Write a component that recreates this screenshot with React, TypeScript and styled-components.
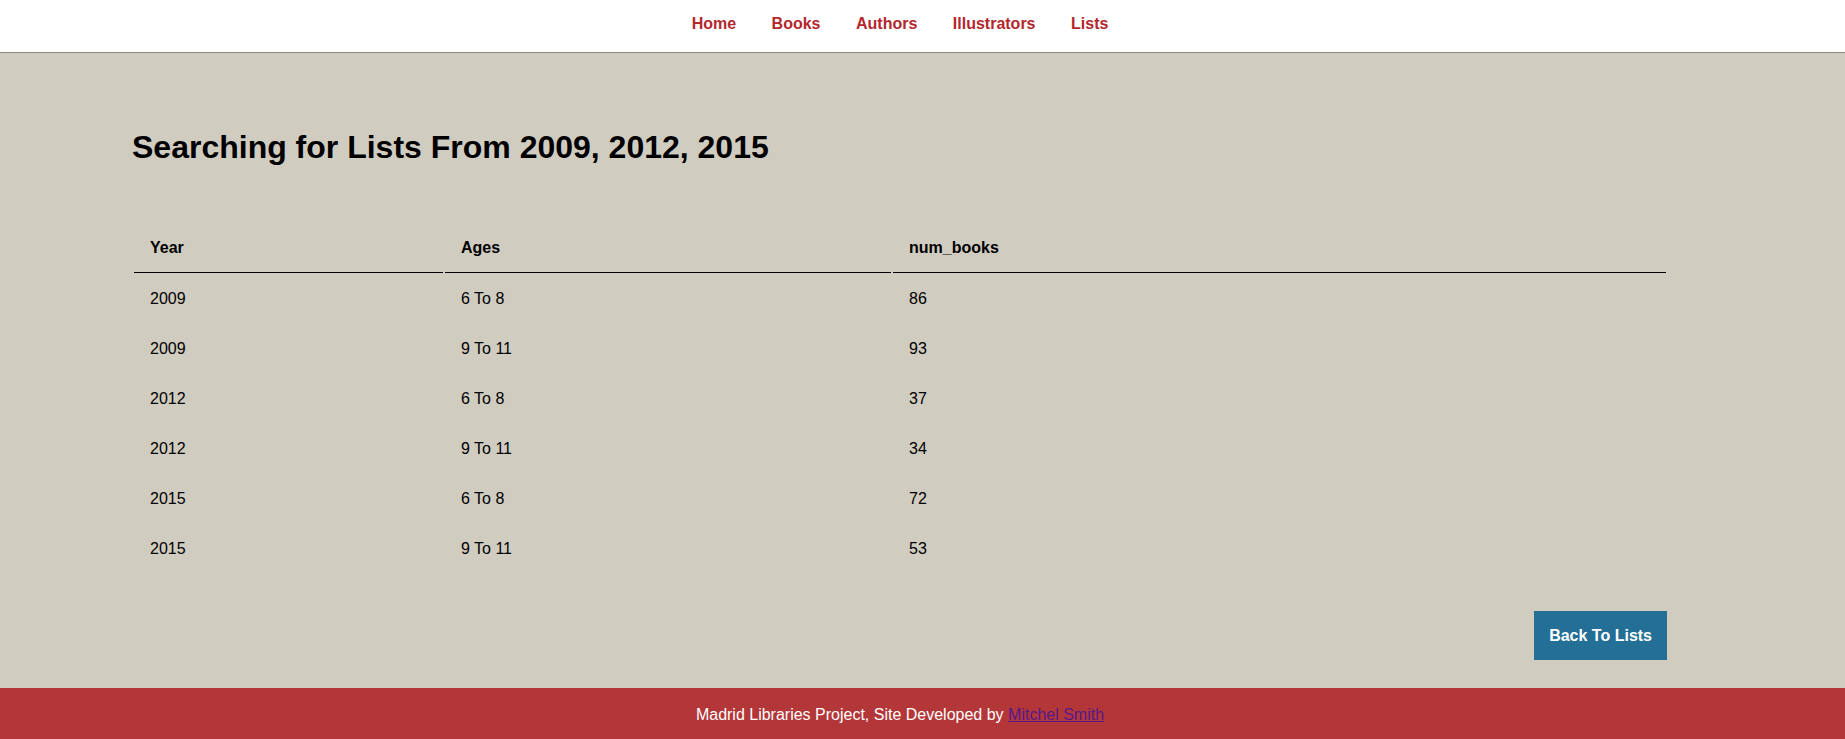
import React from "react";
import styled, { createGlobalStyle } from "styled-components";

const GlobalStyle = createGlobalStyle`
  *, *::before, *::after { box-sizing: border-box; }
  html, body { margin: 0; padding: 0; }
  body {
    font-family: "Liberation Sans", Arial, sans-serif;
    font-size: 16px;
    color: #000;
    background: #d0ccc0;
  }
`;

const Header = styled.header`
  height: 53px;
  background: #ffffff;
  border-bottom: 1px solid #8c8a82;
  padding: 15px 45px 0 0;
`;

const Nav = styled.nav`
  display: flex;
  justify-content: center;
  gap: 35.5px;
`;

const NavLink = styled.a`
  color: #b3272d;
  font-weight: bold;
  font-size: 16px;
  line-height: 18px;
  text-decoration: none;
  cursor: pointer;
`;

const Main = styled.main`
  background: #d0ccc0;
  padding: 76px 45px 28px 0;
`;

const Container = styled.div`
  width: 1536px;
  margin-left: 132px;
`;

const Title = styled.h1`
  margin: 0 0 56px;
  font-size: 32px;
  line-height: 37px;
  font-weight: bold;
`;

const Table = styled.table`
  width: 1536px;
  table-layout: fixed;
  border-collapse: separate;
  border-spacing: 2px;
  margin-bottom: 36px;
`;

const Th = styled.th<{ $w: number }>`
  width: ${(p) => p.$w}px;
  text-align: left;
  font-weight: bold;
  font-size: 16px;
  line-height: 18px;
  padding: 15px 16px;
  border-bottom: 1px solid #000;
`;

const Td = styled.td`
  font-size: 16px;
  line-height: 18px;
  padding: 15px 16px;
`;

const Actions = styled.div`
  display: flex;
  justify-content: flex-end;
  padding-right: 1px;
`;

const Button = styled.button`
  background: #236f96;
  color: #ffffff;
  border: none;
  font-family: "Liberation Sans", Arial, sans-serif;
  font-weight: bold;
  font-size: 16px;
  line-height: 19px;
  padding: 15px 15px;
  cursor: pointer;
`;

const Footer = styled.footer`
  background: #b33638;
  color: #ffffff;
  text-align: center;
  font-size: 16px;
  line-height: 18px;
  padding: 18px 45px 15px 0;
`;

const FooterLink = styled.a`
  color: #551a8b;
  text-decoration: underline;
`;

const rows = [
  ["2009", "6 To 8", "86"],
  ["2009", "9 To 11", "93"],
  ["2012", "6 To 8", "37"],
  ["2012", "9 To 11", "34"],
  ["2015", "6 To 8", "72"],
  ["2015", "9 To 11", "53"],
];

export default function App() {
  return (
    <>
      <GlobalStyle />
      <Header>
        <Nav>
          <NavLink>Home</NavLink>
          <NavLink>Books</NavLink>
          <NavLink>Authors</NavLink>
          <NavLink>Illustrators</NavLink>
          <NavLink>Lists</NavLink>
        </Nav>
      </Header>
      <Main>
        <Container>
          <Title>Searching for Lists From 2009, 2012, 2015</Title>
          <Table>
            <thead>
              <tr>
                <Th $w={309}>Year</Th>
                <Th $w={446}>Ages</Th>
                <Th $w={773}>num_books</Th>
              </tr>
            </thead>
            <tbody>
              {rows.map((r, i) => (
                <tr key={i}>
                  <Td>{r[0]}</Td>
                  <Td>{r[1]}</Td>
                  <Td>{r[2]}</Td>
                </tr>
              ))}
            </tbody>
          </Table>
          <Actions>
            <Button>Back To Lists</Button>
          </Actions>
        </Container>
      </Main>
      <Footer>
        Madrid Libraries Project, Site Developed by <FooterLink href="#">Mitchel Smith</FooterLink>
      </Footer>
    </>
  );
}
